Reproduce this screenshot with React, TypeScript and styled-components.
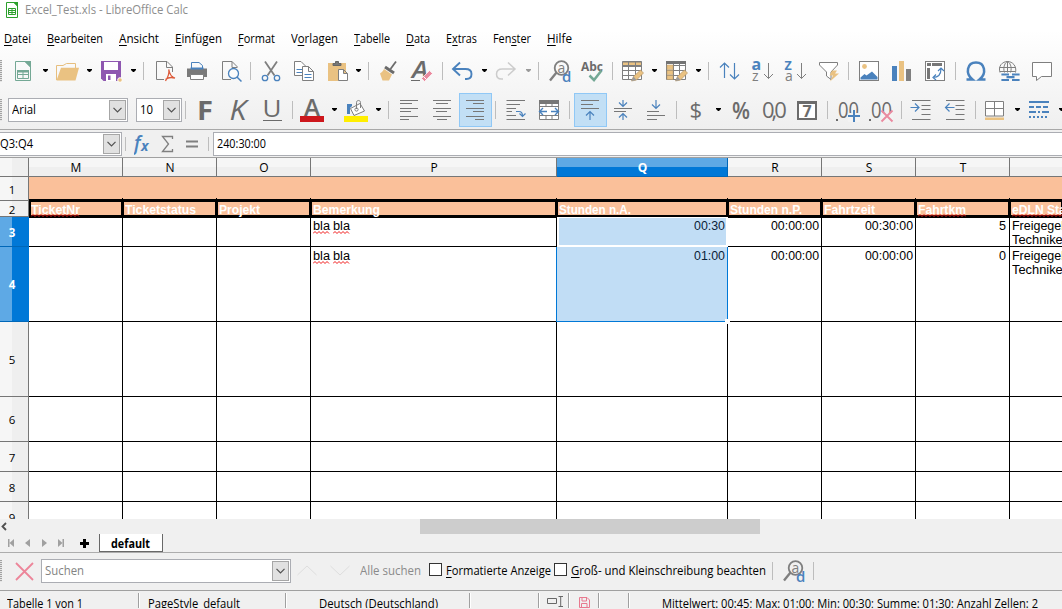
import React, { useLayoutEffect, useRef } from "react";
import styled, { createGlobalStyle, css } from "styled-components";

const GRAY = "#7f7f7f";
const DARK = "#6b6b6b";
const BLUE = "#4a82bd";
const SAND = "#eac282";
const PINK = "#ea8ba0";

const Global = createGlobalStyle`
  *, *::before, *::after { box-sizing: border-box; }
  html, body { margin: 0; padding: 0; }
  body { background: #f0f0f0; overflow: hidden; font-family: "Open Sans", "Noto Sans", sans-serif; font-size: 12px; color: #000; }
`;

/* Text that is condensed or widened so that it takes a given width. */
const Fitted = styled.span<{ $w: number; $bold?: boolean; $color?: string }>`
  display: inline-block;
  position: relative;
  flex: none;
  width: ${(p) => p.$w}px;
  white-space: pre;
  line-height: 16px;
  font-weight: ${(p) => (p.$bold ? 700 : 400)};
  ${(p) => p.$color && css`color: ${p.$color};`}
`;

const Stretch = styled.span`
  display: inline-block;
  transform-origin: 0 50%;
`;

type FitProps = { w: number; bold?: boolean; color?: string; wavy?: number; children: React.ReactNode };

const Wave = styled.svg<{ $y: number }>`
  position: absolute;
  left: 0;
  top: ${(p) => p.$y}px;
`;

function Squiggle({ w, y }: { w: number; y: number }) {
  let d = "M0 2.5";
  for (let x = 2, up = true; x <= w; x += 2, up = !up) d += `L${x} ${up ? 0.5 : 2.5}`;
  return (
    <Wave $y={y} width={w} height="3" viewBox={`0 0 ${w} 3`} fill="none" stroke="#f01818">
      <path d={d} />
    </Wave>
  );
}

function Fit({ w, bold, color, wavy, children }: FitProps) {
  const ref = useRef<HTMLSpanElement>(null);
  useLayoutEffect(() => {
    const inner = ref.current;
    if (!inner) return;
    inner.style.transform = "none";
    const natural = inner.getBoundingClientRect().width;
    if (natural > 0) inner.style.transform = `scaleX(${w / natural})`;
  }, [w]);
  return (
    <Fitted $w={w} $bold={bold} $color={color}>
      <Stretch ref={ref}>{children}</Stretch>
      {wavy !== undefined && <Squiggle w={w} y={wavy} />}
    </Fitted>
  );
}

const Window = styled.div`
  width: 1062px;
  height: 609px;
  overflow: hidden;
  display: flex;
  flex-direction: column;
  background: #f0f0f0;
`;

const TopArea = styled.div`
  height: 130px;
  flex: none;
  display: flex;
  flex-direction: column;
  background: linear-gradient(#fff 0, #fff 30px, #efefef 129px);
  border-bottom: 1px solid #a8a8a8;
`;

const TitleBar = styled.div`
  height: 20px;
  flex: none;
  display: flex;
  align-items: center;
  padding-left: 5px;
  gap: 6px;
`;

const MenuBar = styled.div`
  height: 38px;
  flex: none;
  padding: 11px 0 0 4px;
  display: flex;
  gap: 16px;
  align-items: flex-start;
`;

const Key = styled.span`
  border-bottom: 1px solid #000;
  display: inline-block;
  line-height: 12px;
`;

const ToolRow = styled.div<{ $h: number; $top?: number }>`
  height: ${(p) => p.$h}px;
  padding-top: ${(p) => p.$top || 0}px;
  display: flex;
  align-items: center;
  flex: none;
`;

const Grip = styled.div`
  width: 2px;
  height: 22px;
  flex: none;
  margin-right: 1px;
  background: repeating-linear-gradient(#a2a2a2 0 1px, #e6e6e6 1px 2px);
`;

const Tool = styled.div<{ $gap: number }>`
  width: 24px;
  height: 24px;
  flex: none;
  margin-left: ${(p) => p.$gap}px;
  svg { display: block; overflow: visible; }
`;

const Pressed = styled.div<{ $gap: number }>`
  width: 33px;
  height: 34px;
  flex: none;
  margin-left: ${(p) => p.$gap}px;
  padding: 4px 0 0 3px;
  background: #c2dff5;
  border: 1px solid #90c8f6;
  svg { display: block; overflow: visible; }
`;

const Sep = styled.div<{ $gap: number; $h?: number }>`
  width: 1px;
  height: ${(p) => p.$h || 18}px;
  flex: none;
  background: #bdbdbd;
  margin-left: ${(p) => p.$gap}px;
`;

const Arrow = styled.div<{ $gap: number; $dim?: boolean }>`
  width: 6px;
  height: 3px;
  flex: none;
  margin: -1px 0 0 ${(p) => p.$gap}px;
  background: ${(p) => (p.$dim ? "#9a9a9a" : "#000")};
  clip-path: polygon(0 0, 5px 0, 5px 1px, 3px 3px, 2px 3px, 0 1px);
`;

const Combo = styled.div<{ $w: number; $gap?: number; $flush?: boolean }>`
  width: ${(p) => p.$w}px;
  height: 24px;
  margin-left: ${(p) => p.$gap || 0}px;
  flex: none;
  display: flex;
  align-items: center;
  justify-content: space-between;
  background: #fff;
  border: 1px solid #abadb3;
  ${(p) => p.$flush && css`border-left: 0;`}
  padding: 0 1px 0 ${(p) => (p.$flush ? 0 : 3)}px;
`;

const DropButton = styled.div`
  width: 17px;
  height: 20px;
  background: #e1e1e1;
  border: 1px solid #a6a6a6;
  display: flex;
  align-items: center;
  justify-content: center;
`;

function Drop() {
  return (
    <DropButton>
      <svg width="9" height="6" viewBox="0 0 9 6" fill="none" stroke="#505050" strokeWidth="1.2">
        <path d="M.5 .8 4.5 4.8 8.5 .8" />
      </svg>
    </DropButton>
  );
}

const uiFont = "'Open Sans', 'Noto Sans', sans-serif";

function Glyph({ children }: { children: React.ReactNode }) {
  return (
    <svg width="24" height="24" viewBox="0 0 24 24" fill="none" stroke={GRAY} strokeWidth="1" fontFamily={uiFont}>
      {children}
    </svg>
  );
}

type TProps = { x: number; y: number; s: number; c?: string; b?: number; i?: boolean; w?: number; ls?: number; children: string };
function T({ x, y, s, c = DARK, b = 400, i, w, ls, children }: TProps) {
  return (
    <text x={x} y={y} fontSize={s} fill={c} stroke="none" fontWeight={b} fontStyle={i ? "italic" : "normal"} letterSpacing={ls} textLength={w} lengthAdjust="spacingAndGlyphs">
      {children}
    </text>
  );
}

const NewDoc = () => (
  <Glyph>
    <path d="M4.5 2.5H14L19.500 8V21.500H4.500Z" stroke="#74a895" />
    <path d="M13 2H20V9Z" fill="#74a895" stroke="none" />
    <path d="M6.500 11.500H17.500V19.500H6.500ZM6.500 15.500H17.500M12 12V20" stroke="#74a895" />
    <path d="M6 11H18V13.500H6Z" fill="#74a895" stroke="none" />
  </Glyph>
);
const OpenDoc = () => (
  <Glyph>
    <path d="M1.500 21V6.500H8L11.500 4.500H20.500V9" stroke="#e7bf7e" />
    <path d="M1.500 21.500 6 8.800H24L20.500 21.500Z" fill={SAND} stroke="none" />
  </Glyph>
);
const SaveDoc = () => (
  <Glyph>
    <path d="M2 2H22V22H4.500L2 19.500Z" fill="#8e57b0" stroke="none" />
    <path d="M5 3H19V11H5ZM7 15H17V22H7Z" fill="#fff" stroke="none" />
    <rect x="9" y="16.500" width="2.500" height="4.500" fill="#8e57b0" stroke="none" />
    <circle cx="21" cy="21" r="2.300" fill={SAND} stroke="#fff" />
  </Glyph>
);
const PdfDoc = () => (
  <Glyph>
    <path d="M11 20.500H3.500V2.500H14L19.500 8V13M13.500 2.500V8.500H19" />
    <path d="M12.500 22C15 18 16.500 14 15.800 10.500C16.500 15.500 18.500 18 22 19.200C18.500 18 15 18.500 12.500 20.500" stroke="#dd5b3a" strokeWidth="1.300" />
  </Glyph>
);
const PrintDoc = () => (
  <Glyph>
    <path d="M2 10H5V12.500H19V10H22V18H19V16H5V18H2Z" fill="#7a7a7a" stroke="none" />
    <path d="M6.500 9.500V3.500H14L17.500 6.500V9.500" stroke={BLUE} />
    <rect x="2" y="9.500" width="20" height="8" fill="#7a7a7a" stroke="none" />
    <path d="M5.500 9.500H18.500" stroke={BLUE} strokeWidth="2" />
    <path d="M5.500 15.500V20.500H18.500V15.500Z" fill="#fff" />
  </Glyph>
);
const Preview = () => (
  <Glyph>
    <path d="M12 20.500H3.500V2.500H13L18.500 8M13 2.500V8.500H18.500" />
    <circle cx="14.500" cy="14.500" r="5" stroke={BLUE} fill="#fbfbfb" strokeWidth="1.300" />
    <path d="M18 18 22.500 22.500" stroke={BLUE} strokeWidth="1.500" />
  </Glyph>
);
const Cut = () => (
  <Glyph>
    <path d="M6 2.500 15.500 16.500M18 2.500 8.500 16.500" strokeWidth="1.800" />
    <circle cx="6" cy="19" r="2.700" stroke={BLUE} strokeWidth="1.300" />
    <circle cx="18" cy="19" r="2.700" stroke={BLUE} strokeWidth="1.300" />
  </Glyph>
);
const Copy = () => (
  <Glyph>
    <path d="M2.500 2.500H9L13.500 7V16.500H2.500Z" fill="#fff" />
    <path d="M4.500 10.500H10M4.500 13.500H10" stroke={BLUE} />
    <path d="M10.500 7.500H16.500L21.500 12.500V21.500H10.500ZM16.500 7.500V12.500H21.500" fill="#fff" />
    <path d="M12.500 15.500H19.500M12.500 18.500H19.500" stroke={BLUE} />
  </Glyph>
);
const Paste = () => (
  <Glyph>
    <rect x="2" y="4" width="18" height="18" fill={SAND} stroke="none" />
    <path d="M7 6.500V4.500H9.500V2.500H12.500V4.500H15V6.500Z" fill="#777" stroke="#666" />
    <path d="M12.500 10.500H17.500L21.500 14.500V21.500H12.500ZM17.500 10.500V14.500H21.500" fill="#fff" />
  </Glyph>
);
const Brush = () => (
  <Glyph>
    <path d="M20 2.500 14.500 10" stroke={DARK} strokeWidth="1.800" />
    <path d="M9 8 18 14" stroke={DARK} strokeWidth="3" />
    <path d="M8 10C6.500 13 4.500 14 4 14.500L6.500 21.500H13L16 15.500Z" fill={SAND} stroke="none" />
  </Glyph>
);
const ClearFmt = () => (
  <Glyph>
    <T x={2} y={19} s={23} b={600} i w={16}>A</T>
    <path d="M1 21.500H10" stroke={DARK} />
    <path d="M11.500 19.500 19.500 11.500 22.500 14.500 14.500 22.500Z" fill={PINK} stroke="#fff" strokeWidth=".7" />
    <path d="M13.500 17.500 16.500 20.500" stroke="#fff" />
  </Glyph>
);
const Undo = ({ c = BLUE, flip }: { c?: string; flip?: boolean }) => (
  <Glyph>
    <path transform={flip ? "translate(24 0) scale(-1 1)" : undefined} d="M10 3.500 3 10 10 16.500M3 10H15.500C19.500 10 21.500 12 21.500 15C21.500 18 19.500 20 16.500 20H15" stroke={c} strokeWidth={flip ? 1.5 : 1.9} />
  </Glyph>
);
const FindReplace = () => (
  <Glyph>
    <circle cx="13.500" cy="9" r="6.800" strokeWidth="1.800" />
    <path d="M8.500 13.500 2 21.500" strokeWidth="2.300" />
    <T x={9.5} y={13.500} s={14} c={GRAY}>a</T>
    <T x={14} y={22.500} s={15} c={BLUE} b={600}>d</T>
  </Glyph>
);
const Spell = () => (
  <Glyph>
    <T x={1} y={11.500} s={13} b={700} w={22}>Abc</T>
    <path d="M9.500 16.500 14 21 21.500 11.500" stroke="#74a895" strokeWidth="2.500" />
  </Glyph>
);
const Pencil = () => (
  <>
    <path d="M10.500 22 12.500 17.500 19.500 11 22.500 14 15.500 21Z" fill={SAND} stroke="#b69768" strokeWidth=".7" />
    <path d="M10.500 22 12.500 17.500 15.500 21Z" fill="#999" stroke="none" />
  </>
);
const TableRows = () => (
  <Glyph>
    <path d="M1.500 2.500H20.500V20.500H1.500ZM1.500 7.500H20.500M1.500 11.500H20.500M1.500 16.500H20.500M7.500 3V20M14.500 3V20" fill="#fff" />
    <path d="M1.500 3H20.500V6.500H1.500Z" fill={SAND} stroke={GRAY} />
    <path d="M7.500 3V7M14.500 3V7" />
    <Pencil />
  </Glyph>
);
const TableCols = () => (
  <Glyph>
    <path d="M1.500 2.500H20.500V20.500H1.500ZM1.500 6.500H20.500M1.500 11.500H20.500M1.500 16.500H20.500M8.500 3V20M14.500 3V20" fill="#fff" />
    <path d="M1 2H21V5H1Z" fill="#737373" stroke="none" />
    <path d="M2 6H8V10.500H2ZM2 11.500H8V15.500H2ZM2 16.500H8V20.500H2Z" fill={SAND} stroke="#b89a6a" strokeWidth=".5" />
    <Pencil />
  </Glyph>
);
const Sort = () => (
  <Glyph>
    <path d="M7.500 19V4M3 8.500 7.500 4 12 8.500M17.500 4V20M13 15.500 17.500 20 22 15.500" stroke={BLUE} strokeWidth="1.200" />
  </Glyph>
);
const SortAz = ({ top, bottom, topSize }: { top: string; bottom: string; topSize: number }) => (
  <Glyph>
    <T x={0.5} y={11} s={topSize} c={BLUE} b={700}>{top}</T>
    <T x={1} y={22} s={14} c={GRAY}>{bottom}</T>
    <path d="M17.500 4V19.500M13 15 17.500 19.500 22 15" />
  </Glyph>
);
const Filter = () => (
  <Glyph>
    <path d="M2.500 3.500H20.500V6L14 13V20.500L9.500 17V13L2.500 6Z" fill="#fff" />
    <path d="M15 11.500H20L18 14.500H22L13 22.500 16 16.500H12.500Z" fill={SAND} stroke="none" />
  </Glyph>
);
const Picture = () => (
  <Glyph>
    <rect x="2.500" y="2.500" width="19" height="19" fill="#fff" />
    <circle cx="7.500" cy="7.500" r="2.400" fill={SAND} stroke="none" />
    <path d="M3.500 20.500V18.500L7.500 15 9.500 16.500 15 12.500 20.500 18V20.500Z" fill={BLUE} stroke="none" />
  </Glyph>
);
const Chart = () => (
  <Glyph>
    <rect x="2" y="7" width="5" height="15" fill={BLUE} stroke="none" />
    <rect x="9" y="2" width="5" height="20" fill={SAND} stroke="none" />
    <rect x="16" y="10" width="5" height="12" fill="#808080" stroke="none" />
  </Glyph>
);
const Pivot = () => (
  <Glyph>
    <rect x="2.500" y="2.500" width="19" height="19" fill="#fff" />
    <path d="M4 4H8V7H4ZM9 4H19V7H9ZM4 9H7V20H4Z" fill="#777" stroke="none" />
    <path d="M10 18.500C16 18.500 18 14 18 9.500M15 12 18 9 21 12M13 15.500 10 18.500 13 21" stroke={BLUE} strokeWidth="1.200" />
  </Glyph>
);
const Omega = () => (
  <Glyph>
    <path d="M2.500 20.500H8.500C1 14.500 3 3.500 12 3.500S23 14.500 15.500 20.500H21.500" stroke={BLUE} strokeWidth="2.500" />
  </Glyph>
);
const Link = () => (
  <Glyph>
    <path d="M3 13.500C.8 7 5.500 2.500 10.500 2.500S20 7 18.500 13.500M2.500 8.500H18.500M3 12.500H18M7.500 13.500C5.500 8 8.500 3 10.500 2.500C12.500 3 15.500 8 13.500 13.500M10.500 3V13.500" />
    <path d="M12 15.500H5.500V16.500M5.500 20V21H12M15 15.500H21.500V16.500M21.500 20V21H15M9.500 18.200H17.500" stroke={BLUE} strokeWidth="2.200" />
  </Glyph>
);
const Comment = () => (
  <Glyph>
    <path d="M2.500 3.500H21.500V17.500H11.500L6.500 21.500V17.500H2.500Z" fill="#fff" />
  </Glyph>
);
const Lines = ({ rows }: { rows: number[][] }) => (
  <Glyph>
    {rows.map(([x, y, w]) => (
      <path key={y} d={`M${x} ${y}h${w}`} stroke="#777" />
    ))}
  </Glyph>
);
const FontColor = () => (
  <Glyph>
    <T x={4} y={18} s={23} b={600} w={16}>A</T>
    <rect x="0" y="18" width="24" height="6" fill="#cd171c" stroke="none" />
  </Glyph>
);
const FillColor = () => (
  <Glyph>
    <path d="M3 16V6H8V8L6 10V16Z" fill={BLUE} stroke="none" />
    <path d="M6.500 10.500 16 5.500 20.500 13 10 17.500Z" fill="#fff" />
    <path d="M12.500 11V4.500C12.500 1.800 16.500 1.800 16.500 4.500V10" />
    <circle cx="12.500" cy="11.500" r="1.600" />
    <rect x="0" y="18" width="24" height="6" fill="#ffee00" stroke="none" />
  </Glyph>
);
const Wrap = () => (
  <Glyph>
    <path d="M2.500 2.500H21M2.500 6.500H16M2.500 10.500H12M2.500 13.500H8M2.500 17.500H12M2.500 21.500H21" stroke="#777" />
    <path d="M12 13.500H15C17.500 13.500 18.500 15 18.500 18M15.500 15.500 18.500 18.500 21.500 15.500" stroke={BLUE} strokeWidth="1.200" />
  </Glyph>
);
const Merge = () => (
  <Glyph>
    <path d="M2.500 3.500H21.500V21.500H2.500ZM2.500 8.500H21.500M2.500 17.500H21.500M9 4V8.500M15 4V8.500M9 17.500V21M15 17.500V21" fill="#fff" />
    <rect x="2" y="2" width="20" height="4" fill="#777" stroke="none" />
    <path d="M3 13.500H10M14 13.500H21M6 10 2.500 13.500 6 17M18 10 21.500 13.500 18 17" stroke={BLUE} strokeWidth="1.400" />
  </Glyph>
);
const VTop = () => (
  <Glyph>
    <path d="M3 2.500H21M3 6.500H15M3 10.500H21" stroke="#777" />
    <path d="M12 22V13.500M8 17.500 12 13.500 16 17.500" stroke={BLUE} strokeWidth="1.200" />
  </Glyph>
);
const VMid = () => (
  <Glyph>
    <path d="M3 10.500H21M3 13.500H15" stroke="#777" />
    <path d="M12 2V8M8 4.500 12 8.500 16 4.500M12 22V16M8 19.500 12 15.500 16 19.500" stroke={BLUE} strokeWidth="1.200" />
  </Glyph>
);
const VBottom = () => (
  <Glyph>
    <path d="M3 13.500H15M3 17.500H21M3 21.500H13" stroke="#777" />
    <path d="M12 2V10.500M8 6.500 12 10.500 16 6.500" stroke={BLUE} strokeWidth="1.200" />
  </Glyph>
);
const DateFmt = () => (
  <Glyph>
    <path d="M3 4H21V21H3Z" stroke={DARK} strokeWidth="2" fill="#fff" />
    <path d="M2 3H22V6H2Z" fill={DARK} stroke="none" />
    <T x={7.500} y={19} s={16} b={700}>7</T>
  </Glyph>
);
const Decimals = ({ add }: { add?: boolean }) => (
  <Glyph>
    <rect x="0" y="21" width="2" height="2" fill={DARK} stroke="none" />
    <T x={2} y={20} s={22} c={DARK} w={21}>00</T>
    <path d="M12 15H24V24H12Z" fill="#f3f3f3" stroke="none" />
    {add ? (
      <path d="M12 18H24M18 12V24" stroke={BLUE} strokeWidth="2" />
    ) : (
      <path d="M12.500 12.500 23.500 23.500M23.500 12.500 12.500 23.500" stroke={PINK} strokeWidth="2" />
    )}
  </Glyph>
);
const Indent = ({ out }: { out?: boolean }) => (
  <Glyph>
    <path d="M3 2.500H21.500M12.500 7.500H21.500M12.500 11.500H21.500M12.500 16.500H21.500M3 21.500H21.500" stroke="#777" />
    <path d={out ? "M11.500 9.500H2.500M6.500 5.500 2.500 9.500 6.500 13.500" : "M1.500 9.500H10M6 5.500 10 9.500 6 13.500"} stroke={BLUE} strokeWidth="1.200" />
  </Glyph>
);
const Borders = () => (
  <Glyph>
    <path d="M2.500 3.500H20.500V18H2.500ZM11.500 3.500V18M2.500 10.500H20.500" fill="#fff" />
    <rect x="2" y="19.500" width="19" height="2.500" fill={SAND} stroke="none" />
  </Glyph>
);
const LineStyle = () => (
  <Glyph>
    <path d="M2 4H22" stroke={BLUE} strokeWidth="2" />
    <path d="M2 9H22" stroke={BLUE} strokeWidth="2" strokeDasharray="5 2" />
    <path d="M2 14H22" stroke={BLUE} strokeWidth="2" strokeDasharray="7 2 2 2" />
    <path d="M2 19H22" stroke={BLUE} strokeWidth="2" strokeDasharray="2 2" />
  </Glyph>
);

function StandardBar() {
  return (
    <ToolRow $h={26}>
      <Grip />
      <Tool $gap={8}><NewDoc /></Tool><Arrow $gap={8} />
      <Tool $gap={6}><OpenDoc /></Tool><Arrow $gap={8} />
      <Tool $gap={6}><SaveDoc /></Tool><Arrow $gap={8} />
      <Sep $gap={6} />
      <Tool $gap={9}><PdfDoc /></Tool>
      <Tool $gap={8}><PrintDoc /></Tool>
      <Tool $gap={10}><Preview /></Tool>
      <Sep $gap={7} />
      <Tool $gap={8}><Cut /></Tool>
      <Tool $gap={9}><Copy /></Tool>
      <Tool $gap={10}><Paste /></Tool><Arrow $gap={6} />
      <Sep $gap={6} />
      <Tool $gap={7}><Brush /></Tool>
      <Tool $gap={10}><ClearFmt /></Tool>
      <Sep $gap={8} />
      <Tool $gap={7}><Undo /></Tool><Arrow $gap={8} />
      <Tool $gap={6}><Undo c="#cccccc" flip /></Tool><Arrow $gap={8} $dim />
      <Sep $gap={6} />
      <Tool $gap={9}><FindReplace /></Tool>
      <Tool $gap={8}><Spell /></Tool>
      <Sep $gap={8} />
      <Tool $gap={8}><TableRows /></Tool><Arrow $gap={7} />
      <Tool $gap={7}><TableCols /></Tool><Arrow $gap={7} />
      <Sep $gap={6} />
      <Tool $gap={8}><Sort /></Tool>
      <Tool $gap={10}><SortAz top="a" bottom="z" topSize={16} /></Tool>
      <Tool $gap={9}><SortAz top="Z" bottom="a" topSize={12.5} /></Tool>
      <Tool $gap={9}><Filter /></Tool>
      <Sep $gap={7} />
      <Tool $gap={8}><Picture /></Tool>
      <Tool $gap={9}><Chart /></Tool>
      <Tool $gap={9}><Pivot /></Tool>
      <Sep $gap={8} />
      <Tool $gap={8}><Omega /></Tool>
      <Tool $gap={9}><Link /></Tool>
      <Tool $gap={9}><Comment /></Tool>
    </ToolRow>
  );
}

function FormatBar() {
  return (
    <ToolRow $h={45} $top={7}>
      <Grip />
      <Combo $w={120} $gap={5}><Fit w={24}>Arial</Fit><Drop /></Combo>
      <Combo $w={46} $gap={8}><Fit w={13}>10</Fit><Drop /></Combo>
      <Sep $gap={3} />
      <Tool $gap={7}><Glyph><T x={4} y={22} s={27.500} b={700} w={16}>F</T></Glyph></Tool>
      <Tool $gap={9}><Glyph><T x={3.500} y={22} s={27.500} i w={17}>K</T></Glyph></Tool>
      <Tool $gap={10}><Glyph><T x={2.500} y={18.500} s={23.500} w={19}>U</T><path d="M3 22.500H22" stroke={DARK} /></Glyph></Tool>
      <Sep $gap={8} />
      <Tool $gap={7}><FontColor /></Tool><Arrow $gap={8} />
      <Tool $gap={6}><FillColor /></Tool><Arrow $gap={8} />
      <Sep $gap={6} />
      <Tool $gap={8}><Lines rows={[[3, 2.5, 18], [3, 5.5, 12], [3, 10.5, 18], [3, 13.5, 11], [3, 18.5, 18], [3, 21.5, 9]]} /></Tool>
      <Tool $gap={9}><Lines rows={[[3, 2.5, 18], [6, 5.5, 12], [3, 10.5, 18], [6, 13.5, 11], [3, 18.5, 18], [7, 21.5, 10]]} /></Tool>
      <Pressed $gap={5}><Lines rows={[[3, 2.5, 18], [10, 5.5, 11], [3, 10.5, 18], [10, 13.5, 11], [3, 18.5, 18], [12, 21.5, 9]]} /></Pressed>
      <Sep $gap={3} />
      <Tool $gap={8}><Wrap /></Tool>
      <Tool $gap={9}><Merge /></Tool>
      <Sep $gap={8} />
      <Pressed $gap={4}><VTop /></Pressed>
      <Tool $gap={4}><VMid /></Tool>
      <Tool $gap={9}><VBottom /></Tool>
      <Sep $gap={8} />
      <Tool $gap={7}><Glyph><T x={5.500} y={20} s={22}>$</T></Glyph></Tool><Arrow $gap={8} />
      <Tool $gap={7}><Glyph><T x={3} y={20.500} s={24} b={600} w={18}>%</T></Glyph></Tool>
      <Tool $gap={9}><Glyph><T x={0} y={20} s={22} ls={-3}>0,0</T></Glyph></Tool>
      <Tool $gap={9}><DateFmt /></Tool>
      <Sep $gap={8} />
      <Tool $gap={8}><Decimals add /></Tool>
      <Tool $gap={9}><Decimals /></Tool>
      <Sep $gap={8} />
      <Tool $gap={7}><Indent /></Tool>
      <Tool $gap={10}><Indent out /></Tool>
      <Sep $gap={8} />
      <Tool $gap={7}><Borders /></Tool><Arrow $gap={8} />
      <Tool $gap={6}><LineStyle /></Tool><Arrow $gap={8} />
    </ToolRow>
  );
}

/* ---- formula bar ---- */

const FormulaBar = styled.div`
  height: 28px;
  flex: none;
  display: flex;
  align-items: center;
  border-bottom: 1px solid #a0a0a0;
`;
const FormulaIcons = styled.div`
  margin-left: 8px;
  width: 75px;
  height: 24px;
  flex: none;
  svg { display: block; }
`;
const FormulaInput = styled.div`
  flex: 1;
  height: 24px;
  margin-left: 4px;
  padding-left: 3px;
  display: flex;
  align-items: center;
  background: #fff;
  border: 1px solid #abadb3;
  border-right: 0;
`;

/* ---- sheet ---- */

const HEAD = "#fac09a";
const cols = [
  { n: "M", w: 94 }, { n: "N", w: 94 }, { n: "O", w: 94 }, { n: "P", w: 246 }, { n: "Q", w: 171 },
  { n: "R", w: 94 }, { n: "S", w: 94 }, { n: "T", w: 94 }, { n: "U", w: 53 },
];

const Sheet = styled.div`
  position: relative;
  height: 361px;
  flex: none;
  overflow: hidden;
  background: #fff;
  font-family: "Liberation Sans", Arial, sans-serif;
  font-size: 12px;
`;
const Row = styled.div<{ $h: number }>`
  display: flex;
  height: ${(p) => p.$h}px;
`;
const ColHead = styled.div<{ $w: number; $on?: boolean }>`
  width: ${(p) => p.$w}px;
  flex: none;
  height: 19px;
  padding-left: 1px;
  text-align: center;
  line-height: 19px;
  font-family: "Open Sans", "Noto Sans", sans-serif;
  font-weight: ${(p) => (p.$on ? 700 : 400)};
  color: ${(p) => (p.$on ? "#fff" : "#000")};
  background: ${(p) => (p.$on ? "linear-gradient(#5ea9e5 9px, #0078d7 9px)" : "linear-gradient(#f6f6f6 9px, #efefef 9px)")};
  border-right: 1px solid ${(p) => (p.$on ? "#0067b8" : "#767676")};
  border-bottom: 1px solid ${(p) => (p.$on ? "#0067b8" : "#767676")};
`;
const RowHead = styled.div<{ $on?: boolean }>`
  width: 29px;
  flex: none;
  display: flex;
  align-items: center;
  justify-content: center;
  padding: 1px 4px 0 0;
  font-family: "Open Sans", "Noto Sans", sans-serif;
  font-size: 11.5px;
  font-weight: ${(p) => (p.$on ? 700 : 400)};
  color: ${(p) => (p.$on ? "#fff" : "#000")};
  background: ${(p) => (p.$on ? "linear-gradient(90deg, #5ea9e5 12px, #0078d7 12px)" : "linear-gradient(90deg, #f6f6f6 12px, #efefef 12px)")};
  border-right: 1px solid ${(p) => (p.$on ? "#0078d7" : "#767676")};
  border-bottom: 1px solid ${(p) => (p.$on ? "#0067b8" : "#767676")};
`;
const BannerCell = styled.div<{ $w: number }>`
  width: ${(p) => p.$w}px;
  flex: none;
  background: linear-gradient(#000, #000) right bottom / 1px 1px no-repeat ${HEAD};
  background-origin: padding-box;
  border-bottom: 2px solid #000;
`;
const HeadCell = styled.div<{ $w: number; $first?: boolean }>`
  position: relative;
  z-index: 1;
  width: ${(p) => p.$w}px;
  flex: none;
  background: ${HEAD};
  border: solid #000;
  border-width: 1px 2px 2px ${(p) => (p.$first ? 2 : 1)}px;
  padding-left: ${(p) => (p.$first ? 0 : 1)}px;
  line-height: 16px;
`;
const Cell = styled.div<{ $w: number; $right?: boolean; $sel?: "active" | "range"; $cap?: boolean }>`
  width: ${(p) => p.$w}px;
  flex: none;
  text-align: ${(p) => (p.$right ? "right" : "left")};
  line-height: 14px;
  padding: ${(p) => (p.$cap ? 0 : 1)}px 3px 0 2px;
  border-right: 1px solid #000;
  border-bottom: 1px solid #000;
  ${(p) => p.$cap && css`border-top: 1px solid #000;`}
  ${(p) => p.$sel === "active" && css`
    background: #c1ddf5;
    color: #0a2238;
    border: solid #fff;
    border-width: 1px 2px 2px 2px;
    padding-right: 2px;
  `}
  ${(p) => p.$sel === "range" && css`
    background: #c1ddf5;
    color: #0a2238;
    border-color: #0078d7;
  `}
`;
const Line = styled.div`
  height: 14px;
  white-space: nowrap;
`;
const FillHandle = styled.div`
  position: absolute;
  left: 725px;
  top: 161px;
  width: 5px;
  height: 5px;
  background: #fff;
`;
const SelEdge = styled.div`
  position: absolute;
  left: 556px;
  top: 89px;
  width: 1px;
  height: 75px;
  background: #0078d7;
`;

const titles: [string, number, boolean][] = [
  ["TicketNr", 49, true], ["Ticketstatus", 71, false], ["Projekt", 41, false], ["Bemerkung", 67, false],
  ["Stunden n.A.", 72, false], ["Stunden n.P.", 72, false], ["Fahrtzeit", 51, false], ["Fahrtkm", 48, true], ["eDLN Status", 72, true],
];

const dataRows = [
  { n: 3, h: 30, q: "00:30", r: "00:00:00", s: "00:30:00", t: "5" },
  { n: 4, h: 75, q: "01:00", r: "00:00:00", s: "00:00:00", t: "0" },
];
const emptyRows = [[5, 75], [6, 45], [7, 30], [8, 30], [9, 30]];

function Grid() {
  return (
    <Sheet>
      <Row $h={19}>
        <RowHead />
        {cols.map((c) => <ColHead key={c.n} $w={c.w} $on={c.n === "Q"}>{c.n === "U" ? "" : c.n}</ColHead>)}
      </Row>
      <Row $h={24}>
        <RowHead>1</RowHead>
        {cols.map((c) => <BannerCell key={c.n} $w={c.w} />)}
      </Row>
      <Row $h={16}>
        <RowHead>2</RowHead>
        {titles.map(([text, w, bad], i) => (
          <HeadCell key={text} $w={cols[i].w} $first={i === 0}>
            <Fit w={w} bold color="#fff" wavy={bad ? 12 : undefined}>{text}</Fit>
          </HeadCell>
        ))}
      </Row>
      {dataRows.map((d, i) => (
        <Row key={d.n} $h={d.h}>
          <RowHead $on>{d.n}</RowHead>
          <Cell $w={94} $cap={!i} /><Cell $w={94} $cap={!i} /><Cell $w={94} $cap={!i} />
          <Cell $w={246} $cap={!i}>
            <Line><Fit w={17} wavy={13}>bla</Fit><Fit w={3}> </Fit><Fit w={17} wavy={13}>bla</Fit></Line>
          </Cell>
          <Cell $w={171} $right $cap={!i} $sel={i ? "range" : "active"}><Line><Fit w={31}>{d.q}</Fit></Line></Cell>
          <Cell $w={94} $right $cap={!i}><Line><Fit w={48}>{d.r}</Fit></Line></Cell>
          <Cell $w={94} $right $cap={!i}><Line><Fit w={48}>{d.s}</Fit></Line></Cell>
          <Cell $w={94} $right $cap={!i}><Line><Fit w={7}>{d.t}</Fit></Line></Cell>
          <Cell $w={80} $cap={!i}>
            <Line><Fit w={70}>Freigegeben</Fit></Line>
            <Line><Fit w={55}>Techniker</Fit></Line>
          </Cell>
        </Row>
      ))}
      {emptyRows.map(([n, h]) => (
        <Row key={n} $h={h}>
          <RowHead>{n}</RowHead>
          {cols.map((c) => <Cell key={c.n} $w={c.w} />)}
        </Row>
      ))}
      <SelEdge />
      <FillHandle />
    </Sheet>
  );
}

/* ---- bottom bars ---- */

const ScrollRow = styled.div`
  height: 15px;
  flex: none;
  display: flex;
  svg { margin: 3px 412px 0 1px; flex: none; }
`;
const Thumb = styled.div`
  width: 340px;
  height: 15px;
  background: #cdcdcd;
`;
const TabRow = styled.div`
  height: 19px;
  flex: none;
  display: flex;
  border-bottom: 1px solid #adadad;
  svg { flex: none; display: block; }
`;
const Tab = styled.div`
  margin: 0 0 0 3px;
  width: 64px;
  height: 18px;
  padding: 2px 0 0 11px;
  line-height: 14px;
  background: #fff;
  border: solid #686868;
  border-width: 0 1px 1px;
`;
const FindBar = styled.div`
  height: 38px;
  flex: none;
  display: flex;
  align-items: center;
  padding-bottom: 1px;
  border-bottom: 1px solid #a0a0a0;
`;
const CloseFind = styled.div`
  margin: 0 7px 0 12px;
  height: 19px;
  svg { display: block; }
`;
const Chevrons = styled.div`
  width: 69px;
  height: 12px;
  flex: none;
  svg { display: block; }
`;
const Check = styled.div<{ $l: number; $r: number }>`
  width: 13px;
  height: 13px;
  flex: none;
  margin: -3px ${(p) => p.$r}px 0 ${(p) => p.$l}px;
  background: #fff;
  border: 1px solid #333;
`;
const StatusBar = styled.div`
  height: 17px;
  flex: none;
  display: flex;
  overflow: hidden;
  padding-top: 2px;
`;
const StatusItem = styled.div<{ $w: number; $pad: number; $last?: boolean }>`
  width: ${(p) => p.$w}px;
  height: 17px;
  flex: none;
  padding: 2px 0 0 ${(p) => p.$pad}px;
  white-space: nowrap;
  ${(p) => !p.$last && css`border-right: 1px solid #a0a0a0; box-shadow: 1px 0 #fff;`}
`;

export default function App() {
  return (
    <Window>
      <Global />
      <TopArea>
        <TitleBar>
          <svg width="14" height="18" viewBox="0 0 14 18" fill="none" stroke="#2ca02c">
            <path d="M1.500 1.500H9L12.500 5V16.500H1.500Z" fill="#fff" />
            <path d="M8 1H13V6Z" fill="#2ca02c" stroke="none" />
            <path d="M3.500 7.500H10.500V13.500H3.500ZM3.500 9.500H10.500M3.500 11.500H10.500M7 8V13" />
          </svg>
          <Fit w={163} color="#8e8e8e">Excel_Test.xls - LibreOffice Calc</Fit>
        </TitleBar>
        <MenuBar>
          <Fit w={27}><Key>D</Key>atei</Fit>
          <Fit w={56}><Key>B</Key>earbeiten</Fit>
          <Fit w={40}><Key>A</Key>nsicht</Fit>
          <Fit w={47}><Key>E</Key>infügen</Fit>
          <Fit w={37}><Key>F</Key>ormat</Fit>
          <Fit w={47}>V<Key>o</Key>rlagen</Fit>
          <Fit w={36}><Key>T</Key>abelle</Fit>
          <Fit w={24}><Key>D</Key>ata</Fit>
          <Fit w={31}>E<Key>x</Key>tras</Fit>
          <Fit w={38}>Fen<Key>s</Key>ter</Fit>
          <Fit w={25}><Key>H</Key>ilfe</Fit>
        </MenuBar>
        <StandardBar />
        <FormatBar />
      </TopArea>
      <FormulaBar>
        <Combo $w={122} $flush><Fit w={33}>Q3:Q4</Fit><Drop /></Combo>
        <Sep $gap={3} $h={14} />
        <FormulaIcons>
          <svg width="75" height="24" viewBox="0 0 75 24" fontFamily={uiFont}>
            <T x={0} y={18} s={19} c={BLUE} b={600} i>f</T>
            <T x={7} y={19} s={14} c={BLUE} b={700} i>x</T>
            <path d="M38.500 7V4.500H28.500L34.500 12 28.500 19.500H38.500V17" fill="none" stroke={GRAY} strokeWidth="1.300" />
            <path d="M52 9.500H64M52 14.500H64" stroke={GRAY} strokeWidth="2" />
          </svg>
        </FormulaIcons>
        <Sep $gap={-1} $h={14} />
        <FormulaInput><Fit w={49}>240:30:00</Fit></FormulaInput>
      </FormulaBar>
      <Grid />
      <ScrollRow>
        <svg width="7" height="9" viewBox="0 0 7 9" fill="none" stroke="#505050" strokeWidth="1.800"><path d="M5 1 1.500 4.500 5 8" /></svg>
        <Thumb />
      </ScrollRow>
      <TabRow>
        <svg width="96" height="18" viewBox="0 0 96 18">
          <path d="M8 5H9.500V13H8ZM14 5V13L9.500 9ZM30 5V13L25 9ZM42 5V13L47 9ZM58 5V13L62.500 9ZM62.500 5H64V13H62.500Z" fill="#a0a0a0" />
          <path d="M80 9.500H89M84.500 5V14" stroke="#000" strokeWidth="3" />
        </svg>
        <Tab><Fit w={39} bold>default</Fit></Tab>
      </TabRow>
      <FindBar>
        <Grip />
        <CloseFind>
          <svg width="19" height="19" viewBox="0 0 19 19" stroke="#ec8599" strokeWidth="1.800"><path d="M1 1 18 18M18 1 1 18" /></svg>
        </CloseFind>
        <Combo $w={250}><Fit w={39} color="#838383">Suchen</Fit><Drop /></Combo>
        <Chevrons>
          <svg width="69" height="12" viewBox="0 0 69 12" fill="none" stroke="#dedede"><path d="M6.500 10 16 1 25.500 10M39.500 1 49 10 58.500 1" /></svg>
        </Chevrons>
        <Fit w={61} color="#8a8a8a">Alle suchen</Fit>
        <Check $l={8} $r={4} />
        <Fit w={105}><Key>F</Key>ormatierte Anzeige</Fit>
        <Check $l={3} $r={4} />
        <Fit w={195}><Key>G</Key>roß- und Kleinschreibung beachten</Fit>
        <Sep $gap={6} />
        <Tool $gap={9}><FindReplace /></Tool>
        <Sep $gap={7} />
      </FindBar>
      <StatusBar>
        <StatusItem $w={139} $pad={7}><Fit w={76}>Tabelle 1 von 1</Fit></StatusItem>
        <StatusItem $w={147} $pad={9}><Fit w={92}>PageStyle_default</Fit></StatusItem>
        <StatusItem $w={184} $pad={33}><Fit w={119}>Deutsch (Deutschland)</Fit></StatusItem>
        <StatusItem $w={69} $pad={0} />
        <StatusItem $w={30} $pad={8}>
          <svg width="18" height="13" viewBox="0 0 18 13" fill="none" stroke="#686868"><path d="M.5 3.500H9.500V8.500H.5ZM11.500 1.500H16M11.500 11.500H16M13.700 1.500V11.500" /></svg>
        </StatusItem>
        <StatusItem $w={30} $pad={10}>
          <svg width="11" height="11" viewBox="0 0 11 11" fill="none" stroke="#e8798f"><path d="M.5 .5H8L10.500 3V10.500H.5ZM3 .5V4H7.500V.5M2.500 10V6.500H8V10" /></svg>
        </StatusItem>
        <StatusItem $w={30} $pad={0} />
        <StatusItem $w={433} $pad={33} $last><Fit w={376}>Mittelwert: 00:45; Max: 01:00; Min: 00:30; Summe: 01:30; Anzahl Zellen: 2</Fit></StatusItem>
      </StatusBar>
    </Window>
  );
}
